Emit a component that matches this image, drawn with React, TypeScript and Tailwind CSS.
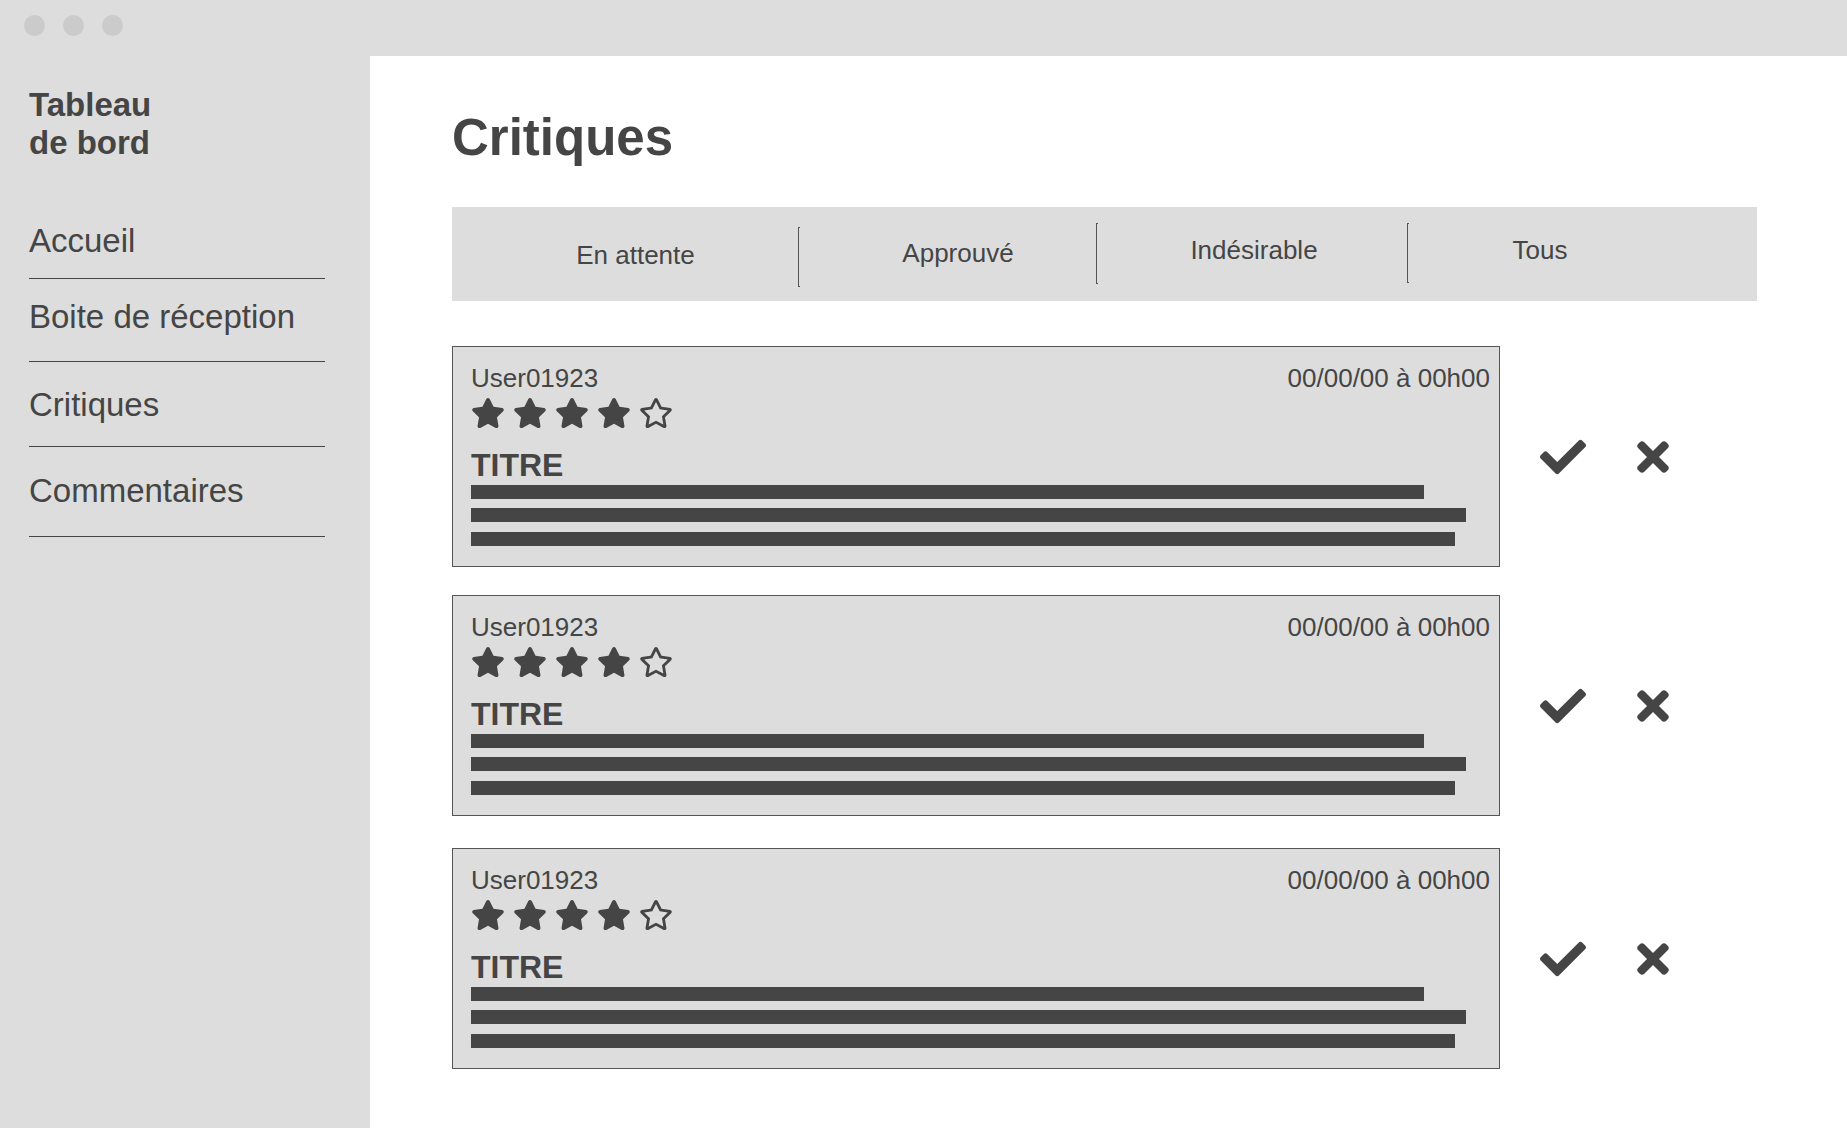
import { FaStar, FaRegStar, FaCheck, FaTimes } from "react-icons/fa";

const navItems = [
  { label: "Accueil", cls: "pt-0 pb-[18px]" },
  { label: "Boite de réception", cls: "pt-[19px] pb-[25px]" },
  { label: "Critiques", cls: "pt-[24px] pb-[22px]" },
  { label: "Commentaires", cls: "pt-[25px] pb-[26px]" },
];

const reviews = [
  { id: 1, user: "User01923", date: "00/00/00 à 00h00", rating: 4, cls: "mt-[45px]" },
  { id: 2, user: "User01923", date: "00/00/00 à 00h00", rating: 4, cls: "mt-[28px]" },
  { id: 3, user: "User01923", date: "00/00/00 à 00h00", rating: 4, cls: "mt-[32px]" },
];

function Divider({ cls }: { cls: string }) {
  return <div className={`w-[2px] shrink-0 border-l border-y border-[#555] ${cls}`} />;
}

function ReviewCard({ user, date, rating }: { user: string; date: string; rating: number }) {
  return (
    <div className="w-[1048px] h-[221px] border border-[#555] bg-[#dddddd] pt-[16px] pl-[18px] pr-[9px]">
      <div className="flex justify-between items-start text-[26px] leading-[30px]">
        <span>{user}</span>
        <span>{date}</span>
      </div>
      <div className="mt-[3px] flex gap-[8px]">
        {[1, 2, 3, 4, 5].map((n) =>
          n <= rating ? (
            <FaStar key={n} size={34} className="text-[#454545]" />
          ) : (
            <FaRegStar key={n} size={34} className="text-[#454545]" />
          )
        )}
      </div>
      <div className="mt-[17px] text-[32px] leading-[36px] font-bold">TITRE</div>
      <div className="mt-[2px] h-[14px] w-[953px] bg-[#454545]" />
      <div className="mt-[9px] h-[14px] w-[995px] bg-[#454545]" />
      <div className="mt-[10px] h-[14px] w-[984px] bg-[#454545]" />
    </div>
  );
}

export default function App() {
  return (
    <div className="w-full h-screen overflow-hidden flex flex-col bg-[#dddddd] text-[#454545] font-['Liberation_Sans',Arial,sans-serif]">
      {/* window chrome */}
      <div className="h-[56px] shrink-0 flex items-start pt-[15px] pl-[24px] gap-[18px]">
        <div className="w-[21px] h-[21px] rounded-full bg-[#cbcbcb]" />
        <div className="w-[21px] h-[21px] rounded-full bg-[#cbcbcb]" />
        <div className="w-[21px] h-[21px] rounded-full bg-[#cbcbcb]" />
      </div>

      <div className="flex flex-1 min-h-0">
        {/* sidebar */}
        <aside className="w-[370px] shrink-0 pt-[30px] pl-[29px]">
          <div className="text-[33px] leading-[38px] font-bold">
            Tableau
            <br />
            de bord
          </div>
          <ul className="mt-[60px] w-[296px]">
            {navItems.map((item) => (
              <li
                key={item.label}
                className={`border-b border-[#454545] text-[33px] leading-[38px] ${item.cls}`}
              >
                {item.label}
              </li>
            ))}
          </ul>
        </aside>

        {/* main */}
        <main className="flex-1 bg-white pt-[52px] pl-[82px]">
          <h1 className="text-[51px] leading-[60px] font-bold">Critiques</h1>

          <div className="mt-[39px] w-[1305px] h-[94px] bg-[#dddddd] flex items-start text-[26px] leading-[30px]">
            <div className="w-[346px] shrink-0 flex justify-center pt-[33px] pl-[21px]">En attente</div>
            <Divider cls="mt-[20px] h-[60px]" />
            <div className="w-[296px] shrink-0 flex justify-center pt-[31px] pl-[20px]">Approuvé</div>
            <Divider cls="mt-[16px] h-[61px]" />
            <div className="w-[309px] shrink-0 flex justify-center pt-[28px] pl-[3px]">Indésirable</div>
            <Divider cls="mt-[16px] h-[60px]" />
            <div className="w-[348px] shrink-0 flex justify-center pt-[28px] pr-[86px]">Tous</div>
          </div>

          {reviews.map((r) => (
            <div key={r.id} className={`flex items-center ${r.cls}`}>
              <ReviewCard user={r.user} date={r.date} rating={r.rating} />
              <button className="ml-[40px] text-[#454545]">
                <FaCheck size={46} />
              </button>
              <button className="ml-[44px] text-[#454545]">
                <FaTimes size={46} />
              </button>
            </div>
          ))}
        </main>
      </div>
    </div>
  );
}
